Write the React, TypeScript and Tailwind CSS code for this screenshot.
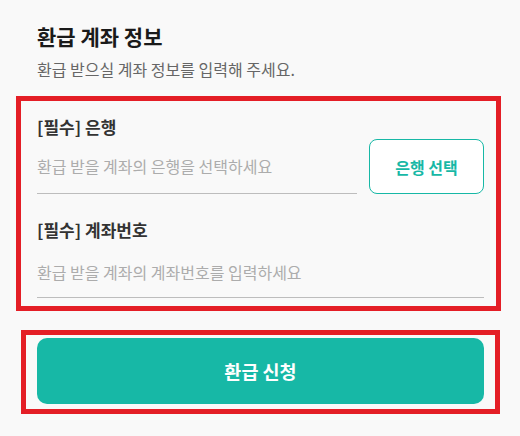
import React from "react";

export default function App() {
  return (
    <div
      className="w-[520px] h-[436px] bg-[#f9f9f9] overflow-hidden"
      style={{ fontFamily: '"Noto Sans CJK KR", "Noto Sans", sans-serif' }}
    >
      <div className="pl-[37px] pt-[21px]">
        <h1 className="text-[21px] leading-[30px] font-bold text-[#1a1a1a]">
          환급 계좌 정보
        </h1>
        <p className="mt-[7px] text-[16px] leading-[22px] text-[#666666]">
          환급 받으실 계좌 정보를 입력해 주세요.
        </p>
      </div>

      <div className="ml-[16px] mt-[16px] w-[485px] border-[5px] border-[#e41e26] pl-[16px] pr-[12px] pt-[14px] pb-[8px]">
        <label className="block text-[17px] leading-[24px] font-bold text-[#333333]">
          [필수] 은행
        </label>
        <div className="flex items-start gap-[12px]">
          <div className="flex-1 h-[55px] border-b border-[#bdbdbd] flex items-center">
            <input
              readOnly
              placeholder="환급 받을 계좌의 은행을 선택하세요"
              className="w-full bg-transparent outline-none text-[16px] leading-[22px] text-[#333] placeholder:text-[#acacac]"
            />
          </div>
          <button className="w-[115px] h-[55px] rounded-[8px] border border-[#17b8a6] bg-white text-[#17b8a6] text-[16px] font-bold leading-[22px]">
            은행 선택
          </button>
        </div>

        <label className="block mt-[24px] text-[17px] leading-[24px] font-bold text-[#333333]">
          [필수] 계좌번호
        </label>
        <div className="mt-[3px] h-[53px] border-b border-[#bdbdbd] flex items-center pt-[2px]">
          <input
            placeholder="환급 받을 계좌의 계좌번호를 입력하세요"
            className="w-full bg-transparent outline-none text-[16px] leading-[22px] text-[#333] placeholder:text-[#acacac]"
          />
        </div>
      </div>

      <div className="ml-[21px] mt-[19px] w-[479px] border-[5px] border-[#e41e26] px-[11px] pt-[3px] pb-[5px]">
        <button className="w-full h-[66px] rounded-[10px] bg-[#17b8a6] text-white text-[18.5px] font-bold leading-[26px]">
          환급 신청
        </button>
      </div>
    </div>
  );
}
